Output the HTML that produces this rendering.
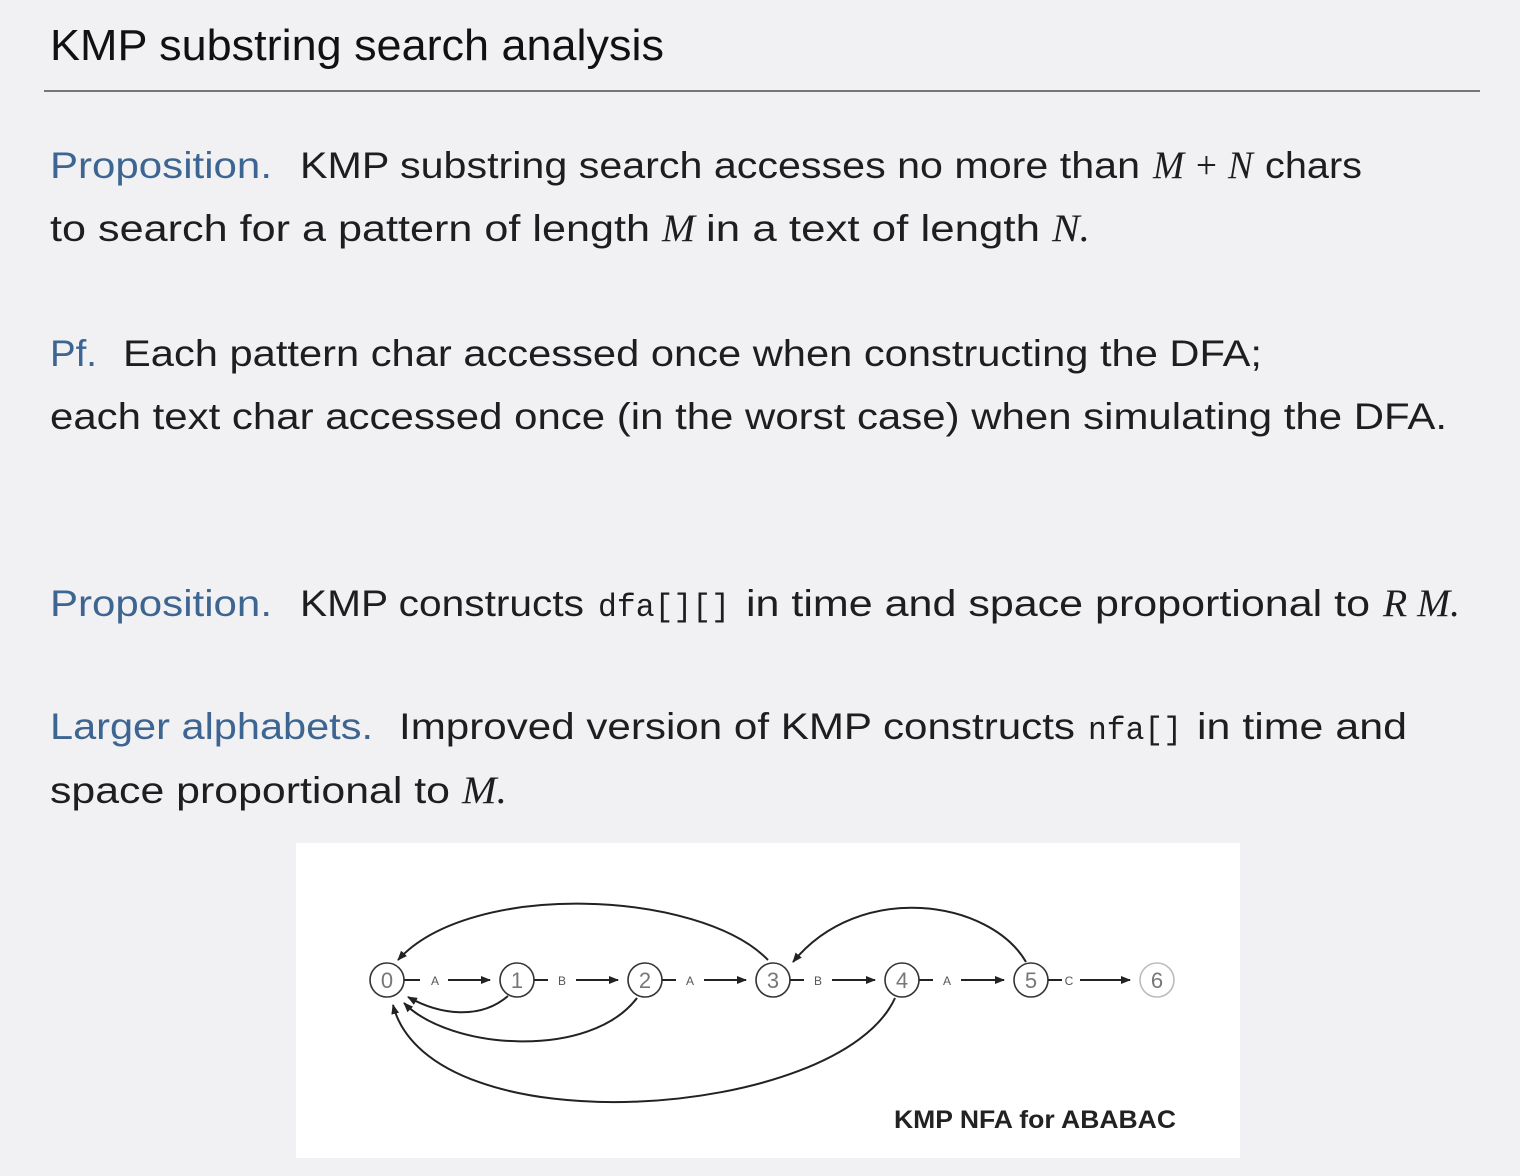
<!DOCTYPE html>
<html><head><meta charset="utf-8"><style>
html,body{margin:0;padding:0;background:#f1f0f3;}
svg{display:block}
.t{font-family:"Liberation Sans",sans-serif;font-size:37px;fill:#1e1e1e}
.b{font-family:"Liberation Sans",sans-serif;font-size:37px;fill:#3d6592}
.i{font-family:"Liberation Serif",serif;font-style:italic;font-size:39px;fill:#1e1e1e}
.m{font-family:"Liberation Mono",monospace;font-size:32px;fill:#1e1e1e}
.n{font-family:"Liberation Sans",sans-serif;font-size:22px;fill:#777;text-anchor:middle}
.l{font-family:"Liberation Sans",sans-serif;font-size:12px;fill:#555;text-anchor:middle}
</style></head><body>
<svg width="1520" height="1176" viewBox="0 0 1520 1176" xmlns="http://www.w3.org/2000/svg">
<text x="50" y="60" font-family="Liberation Sans,sans-serif" font-size="44" fill="#111" textLength="614" lengthAdjust="spacingAndGlyphs">KMP substring search analysis</text>
<rect x="44" y="90" width="1436" height="2" fill="#777"/>

<text class="b" x="50" y="178" textLength="222" lengthAdjust="spacingAndGlyphs">Proposition.</text>
<text class="t" x="300" y="178" textLength="840" lengthAdjust="spacingAndGlyphs">KMP substring search accesses no more than</text>
<text class="i" x="1153" y="178" textLength="100" lengthAdjust="spacingAndGlyphs">M + N</text>
<text class="t" x="1265" y="178" textLength="97" lengthAdjust="spacingAndGlyphs">chars</text>

<text class="t" x="50" y="241" textLength="600" lengthAdjust="spacingAndGlyphs">to search for a pattern of length</text>
<text class="i" x="662" y="241" textLength="33" lengthAdjust="spacingAndGlyphs">M</text>
<text class="t" x="706" y="241" textLength="334" lengthAdjust="spacingAndGlyphs">in a text of length</text>
<text class="i" x="1052" y="241" textLength="38" lengthAdjust="spacingAndGlyphs">N.</text>

<text class="b" x="50" y="366" textLength="47" lengthAdjust="spacingAndGlyphs">Pf.</text>
<text class="t" x="123" y="366" textLength="1139" lengthAdjust="spacingAndGlyphs">Each pattern char accessed once when constructing the DFA;</text>
<text class="t" x="50" y="429" textLength="1397" lengthAdjust="spacingAndGlyphs">each text char accessed once (in the worst case) when simulating the DFA.</text>

<text class="b" x="50" y="616" textLength="222" lengthAdjust="spacingAndGlyphs">Proposition.</text>
<text class="t" x="300" y="616" textLength="284" lengthAdjust="spacingAndGlyphs">KMP constructs</text>
<text class="m" x="598" y="616" textLength="132" lengthAdjust="spacingAndGlyphs">dfa[][]</text>
<text class="t" x="746" y="616" textLength="624" lengthAdjust="spacingAndGlyphs">in time and space proportional to</text>
<text class="i" x="1383" y="616" textLength="77" lengthAdjust="spacingAndGlyphs">R M.</text>

<text class="b" x="50" y="739" textLength="323" lengthAdjust="spacingAndGlyphs">Larger alphabets.</text>
<text class="t" x="399" y="739" textLength="676" lengthAdjust="spacingAndGlyphs">Improved version of KMP constructs</text>
<text class="m" x="1088" y="739" textLength="94" lengthAdjust="spacingAndGlyphs">nfa[]</text>
<text class="t" x="1197" y="739" textLength="210" lengthAdjust="spacingAndGlyphs">in time and</text>
<text class="t" x="50" y="803" textLength="400" lengthAdjust="spacingAndGlyphs">space proportional to</text>
<text class="i" x="462" y="803" textLength="45" lengthAdjust="spacingAndGlyphs">M.</text>

<rect x="296" y="843" width="944" height="315" fill="#fff"/>
<defs><marker id="a" markerWidth="10" markerHeight="8" refX="9" refY="4" orient="auto" markerUnits="userSpaceOnUse"><path d="M0,0 L10,4 L0,8 z" fill="#222"/></marker></defs>
<g stroke="#222" stroke-width="2" fill="none">
<path d="M768,960 C700,890 470,880 398,960" marker-end="url(#a)"/>
<path d="M1026,962 C990,900 860,880 793,962" marker-end="url(#a)"/>
<path d="M508,996 C480,1020 440,1015 408,997" marker-end="url(#a)"/>
<path d="M637,998 C590,1060 450,1050 404,1003" marker-end="url(#a)"/>
<path d="M895,998 C840,1120 430,1150 393,1005" marker-end="url(#a)"/>
</g>
<g stroke="#333" stroke-width="1.6" fill="#fff">
<circle cx="387" cy="980" r="17"/><circle cx="517" cy="980" r="17"/><circle cx="645" cy="980" r="17"/><circle cx="773" cy="980" r="17"/><circle cx="902" cy="980" r="17"/><circle cx="1031" cy="980" r="17"/><circle cx="1157" cy="980" r="17" stroke="#bbb"/>
</g>
<g stroke="#222" stroke-width="2">
<line x1="404" y1="980" x2="420" y2="980"/><line x1="448" y1="980" x2="490" y2="980" marker-end="url(#a)"/>
<line x1="534" y1="980" x2="548" y2="980"/><line x1="576" y1="980" x2="618" y2="980" marker-end="url(#a)"/>
<line x1="662" y1="980" x2="676" y2="980"/><line x1="704" y1="980" x2="746" y2="980" marker-end="url(#a)"/>
<line x1="790" y1="980" x2="804" y2="980"/><line x1="832" y1="980" x2="875" y2="980" marker-end="url(#a)"/>
<line x1="919" y1="980" x2="933" y2="980"/><line x1="961" y1="980" x2="1004" y2="980" marker-end="url(#a)"/>
<line x1="1048" y1="980" x2="1062" y2="980"/><line x1="1080" y1="980" x2="1130" y2="980" marker-end="url(#a)"/>
</g>
<g>
<text class="n" x="387" y="988">0</text><text class="n" x="517" y="988">1</text><text class="n" x="645" y="988">2</text><text class="n" x="773" y="988">3</text><text class="n" x="902" y="988">4</text><text class="n" x="1031" y="988">5</text><text class="n" x="1157" y="988" fill="#bbb">6</text>
<text class="l" x="435" y="985">A</text><text class="l" x="562" y="985">B</text><text class="l" x="690" y="985">A</text><text class="l" x="818" y="985">B</text><text class="l" x="947" y="985">A</text><text class="l" x="1069" y="985">C</text>
</g>
<text x="894" y="1128" font-family="Liberation Sans,sans-serif" font-size="25" font-weight="bold" fill="#222" textLength="282" lengthAdjust="spacingAndGlyphs">KMP NFA for ABABAC</text>
</svg>
</body></html>
